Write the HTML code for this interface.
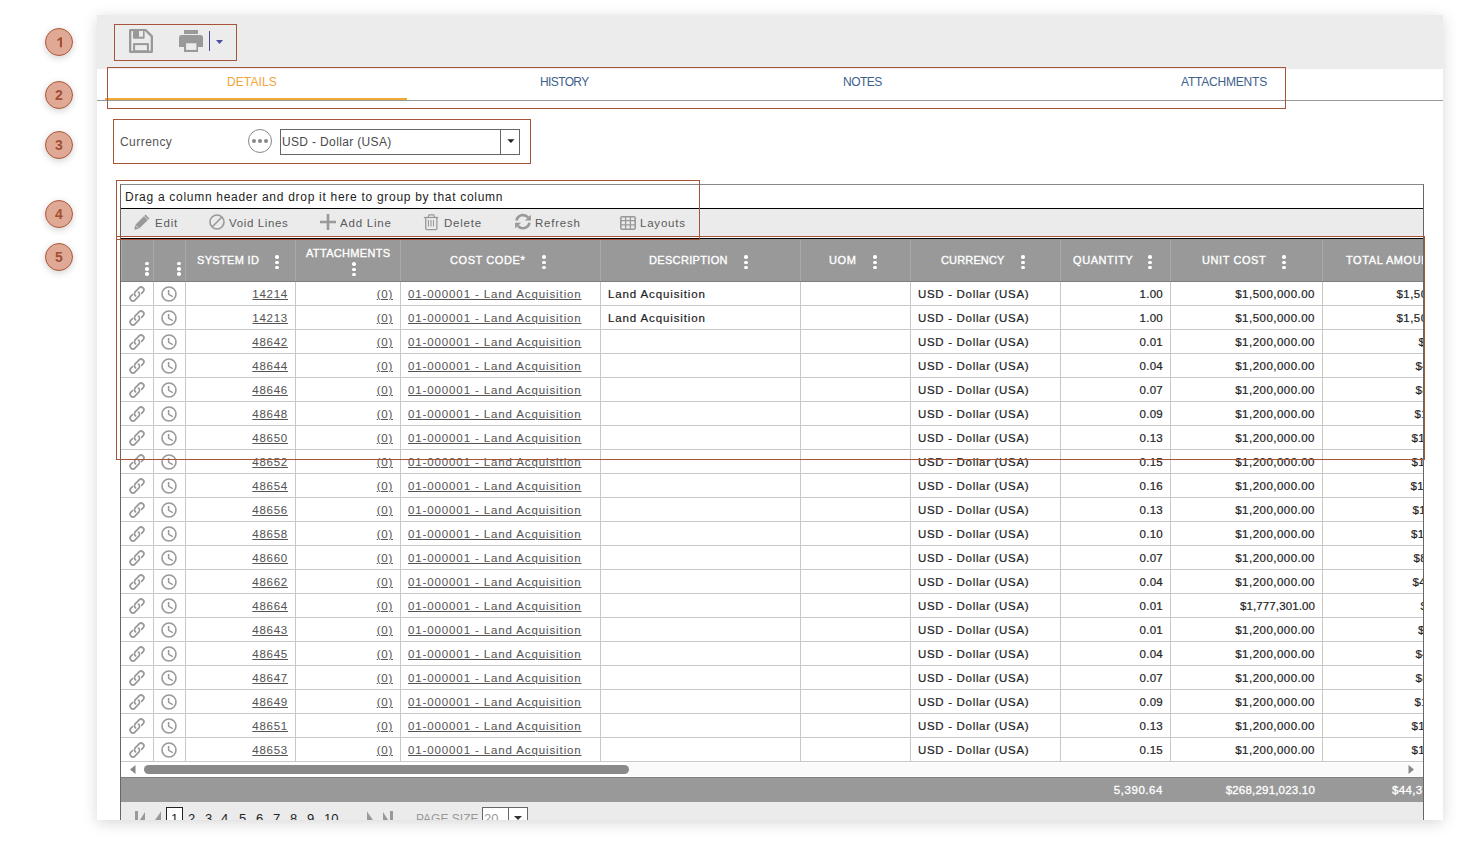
<!DOCTYPE html>
<html><head><meta charset="utf-8">
<style>
*{box-sizing:border-box;margin:0;padding:0}
html,body{width:1462px;height:843px;overflow:hidden;background:#fff;font-family:"Liberation Sans",sans-serif;position:relative}
.a{position:absolute}
.panel{position:absolute;left:97px;top:15px;width:1346px;height:805px;background:#fff;box-shadow:0 3px 14px rgba(0,0,0,0.16)}
.circ{position:absolute;left:45px;width:28px;height:28px;border-radius:50%;background:#dfa995;border:1.5px solid #b0583b;color:#a24f33;font-weight:bold;font-size:14px;line-height:27px;text-align:center;box-shadow:0 2px 7px rgba(0,0,0,0.18)}
.red{position:absolute;border:1px solid #a8543a;z-index:20}
.tab{position:absolute;top:77px;font-size:12px;color:#3c6189;letter-spacing:0.1px;line-height:10px;white-space:nowrap}
.tb{position:absolute;top:216px;font-size:11.5px;color:#5a5a5a;white-space:nowrap;line-height:14px;letter-spacing:0.78px}
.hd{position:absolute;top:240px;height:41px;background:#999;border-right:1px solid #aaa;color:#fff;font-size:11px;font-weight:normal;-webkit-text-stroke:0.35px #fff;letter-spacing:0.58px}
.hd span{position:absolute;white-space:nowrap;top:15px;line-height:11px}
.keb{position:absolute;width:4px;height:14px}
.keb i{position:absolute;left:0.2px;width:3.6px;height:3.6px;border-radius:50%;background:#fff}
.row{position:absolute;left:121px;width:1302px;height:24px;border-bottom:1px solid #c8c8c8}
.c{position:absolute;top:0;height:23px;border-right:1px solid #c8c8c8;font-size:11.5px;color:#222;white-space:nowrap;overflow:hidden;line-height:24px;letter-spacing:0.73px;-webkit-text-stroke:0.2px currentColor}
.row .c{margin-left:-121px}
.c.r{text-align:right;padding-right:7px}
.c.l{text-align:left;padding-left:7px}
.c.lk{color:#555;-webkit-text-stroke:0.05px currentColor}
.c u{text-decoration:underline;text-underline-offset:1px}
.ic{position:absolute;top:4px}
.ft{position:absolute;top:783px;font-size:11.5px;color:#fff;line-height:14px;text-align:right;-webkit-text-stroke:0.3px #fff}
.pg{position:absolute;top:812px;font-size:13px;color:#222;line-height:14px}
</style></head><body>
<div class="panel"></div>
<!-- numbered circles -->
<div class="circ" style="top:28px"><svg style="position:absolute;left:10.5px;top:8px" width="6" height="11" viewBox="0 0 6 11"><path d="M2.9 0.3 H5 V10.2 H2.9 V2.8 Q1.8 3.6 0.4 3.9 V2.2 Q2.2 1.6 2.9 0.3 Z" fill="#a24f33"/></svg></div>
<div class="circ" style="top:81px">2</div>
<div class="circ" style="top:131px">3</div>
<div class="circ" style="top:200px">4</div>
<div class="circ" style="top:243px">5</div>

<!-- top toolbar -->
<div class="a" style="left:97px;top:15px;width:1346px;height:54px;background:#ececec"></div>
<svg class="a" style="left:129px;top:29px" width="24" height="24" viewBox="0 0 24 24">
  <path d="M1.15 1.15 H16.6 L22.85 7.4 V22.85 H1.15 Z" fill="none" stroke="#999" stroke-width="2.3" stroke-linejoin="round"/>
  <rect x="4" y="2" width="11.6" height="7.8" rx="0.8" fill="#999"/>
  <rect x="10" y="2" width="4" height="5.7" fill="#ececec"/>
  <rect x="5.1" y="15.1" width="13.8" height="7.2" fill="none" stroke="#999" stroke-width="2"/>
</svg>
<svg class="a" style="left:179px;top:30px" width="24" height="22" viewBox="0 0 24 22">
  <rect x="5" y="0" width="14" height="4" fill="#999"/>
  <path d="M2.5 5 H21.5 Q24 5 24 8 V17 H0 V8 Q0 5 2.5 5 Z" fill="#999"/>
  <rect x="5" y="12" width="14" height="10" fill="#999"/>
  <rect x="7.1" y="13.3" width="10.3" height="6.6" fill="#ececec"/>
</svg>
<div class="a" style="left:209px;top:31px;width:1px;height:20px;background:#4a4d96"></div>
<svg class="a" style="left:216px;top:40px" width="7" height="4" viewBox="0 0 7 4"><path d="M0 0 H7 L3.5 4 Z" fill="#4a4da0"/></svg>

<!-- tabs -->
<div class="a" style="left:97px;top:100px;width:1346px;height:1px;background:#999"></div>
<div class="a" style="left:105px;top:98px;width:302px;height:2px;background:#f2a934"></div>
<div class="tab" style="left:227px;color:#f0a53a">DETAILS</div>
<div class="tab" style="left:540px;letter-spacing:-0.62px">HISTORY</div>
<div class="tab" style="left:843px;letter-spacing:-0.5px">NOTES</div>
<div class="tab" style="left:1181px;letter-spacing:-0.2px">ATTACHMENTS</div>

<!-- currency -->
<div class="a" style="left:120px;top:135px;font-size:12px;color:#555;line-height:14px;letter-spacing:0.45px">Currency</div>
<div class="a" style="left:248px;top:129px;width:24px;height:24px;border-radius:50%;border:1px solid #888;background:#fff"></div>
<div class="a" style="left:252px;top:139px;width:4px;height:4px;border-radius:50%;background:#888"></div>
<div class="a" style="left:258px;top:139px;width:4px;height:4px;border-radius:50%;background:#888"></div>
<div class="a" style="left:264px;top:139px;width:4px;height:4px;border-radius:50%;background:#888"></div>
<div class="a" style="left:280px;top:129px;width:240px;height:26px;border:1px solid #666;background:#fff"></div>
<div class="a" style="left:500px;top:130px;width:1px;height:24px;background:#666"></div>
<svg class="a" style="left:507px;top:139px" width="8" height="4" viewBox="0 0 8 4"><path d="M0.3 0.3 H7.5 L3.9 3.9 Z" fill="#222"/></svg>
<div class="a" style="left:282px;top:135px;font-size:12px;color:#4a4a4a;line-height:14px;letter-spacing:0.35px">USD - Dollar (USA)</div>

<!-- grid frame -->
<div class="a" style="left:120px;top:184px;width:1304px;height:636px;border-left:1px solid #666;border-right:1px solid #666;border-top:1px solid #888"></div>
<div class="a" style="left:125px;top:190px;font-size:12px;color:#222;line-height:14px;letter-spacing:0.71px">Drag a column header and drop it here to group by that column</div>
<div class="a" style="left:121px;top:208px;width:1302px;height:1px;background:#000"></div>
<div class="a" style="left:121px;top:209px;width:1302px;height:27px;background:#ebebeb"></div>
<div class="a" style="left:121px;top:238px;width:1302px;height:1px;background:#000"></div>
<div class="a" style="left:121px;top:239px;width:1302px;height:1px;background:#999"></div>

<!-- grid toolbar -->
<svg class="a" style="left:134px;top:214px" width="16" height="16" viewBox="0 0 16 16"><path d="M11.6 0.6 L15.4 4.4 L5 14.8 L0.3 15.7 L1.2 11 Z" fill="#999"/><path d="M10.2 2 L14 5.8" stroke="#ebebeb" stroke-width="0.8"/><path d="M1.2 11 L5 14.8" stroke="#ebebeb" stroke-width="0.8"/></svg>
<div class="tb" style="left:155px">Edit</div>
<svg class="a" style="left:209px;top:214px" width="16" height="16" viewBox="0 0 16 16"><circle cx="8" cy="8" r="7" fill="none" stroke="#999" stroke-width="1.6"/><path d="M3 13 L13 3" stroke="#999" stroke-width="1.6"/></svg>
<div class="tb" style="left:229px;letter-spacing:0.63px">Void Lines</div>
<svg class="a" style="left:320px;top:214px" width="16" height="16" viewBox="0 0 16 16"><path d="M8 0 V16 M0 8 H16" stroke="#999" stroke-width="2.6"/></svg>
<div class="tb" style="left:340px">Add Line</div>
<svg class="a" style="left:423px;top:214px" width="17" height="17" viewBox="0 0 17 17"><path d="M0.8 3.5 H15.2" stroke="#999" stroke-width="1.3"/><path d="M5.2 3.2 L6 0.9 H10.8 L11.6 3.2" stroke="#999" stroke-width="1.2" fill="none"/><path d="M2.7 3.8 V14.3 Q2.7 15.6 4.1 15.6 H12.5 Q13.9 15.6 13.9 14.3 V3.8" stroke="#999" stroke-width="1.3" fill="none"/><path d="M5.4 6 V12.5 M8 6 V12.5 M10.5 6 V12.5" stroke="#999" stroke-width="1.1"/></svg>
<div class="tb" style="left:444px">Delete</div>
<svg class="a" style="left:515px;top:213px" width="16" height="17" viewBox="0 0 16 17"><path d="M1.55 7.5 A6.55 6.55 0 0 1 13.02 4.44" stroke="#999" stroke-width="2.7" fill="none"/><path d="M9.9 7.5 H15.9 V1.8 Z" fill="#999"/><path d="M14.45 9.8 A6.55 6.55 0 0 1 2.98 12.86" stroke="#999" stroke-width="2.7" fill="none"/><path d="M0.1 9.8 H6.1 L0.1 15.5 Z" fill="#999"/></svg>
<div class="tb" style="left:535px;letter-spacing:0.78px">Refresh</div>
<svg class="a" style="left:620px;top:216px" width="16" height="14" viewBox="0 0 16 14"><rect x="0.8" y="0.8" width="14.4" height="12.4" rx="1.5" fill="none" stroke="#999" stroke-width="1.6"/><path d="M0.8 4.6 H15.2 M0.8 8.8 H15.2 M5.6 0.8 V13.2 M10.4 0.8 V13.2" stroke="#999" stroke-width="1.3"/></svg>
<div class="tb" style="left:640px">Layouts</div>

<!-- header -->
<div class="hd" style="left:121px;width:33px"><div class="keb" style="left:24px;top:21.6px"><i style="top:0.2px"></i><i style="top:5.5px"></i><i style="top:10.8px"></i></div></div>
<div class="hd" style="left:154px;width:32px"><div class="keb" style="left:23px;top:21.6px"><i style="top:0.2px"></i><i style="top:5.5px"></i><i style="top:10.8px"></i></div></div>
<div class="hd" style="left:186px;width:110px"><span style="left:11px;letter-spacing:0.33px">SYSTEM ID</span><div class="keb" style="left:89px;top:15px"><i style="top:0.2px"></i><i style="top:5.5px"></i><i style="top:10.8px"></i></div></div>
<div class="hd" style="left:296px;width:105px"><span style="left:10px;top:8px;letter-spacing:0.33px">ATTACHMENTS</span><div class="keb" style="left:56px;top:22px"><i style="top:0.2px"></i><i style="top:5.5px"></i><i style="top:10.8px"></i></div></div>
<div class="hd" style="left:401px;width:200px"><span style="left:49px">COST CODE*</span><div class="keb" style="left:141px;top:15px"><i style="top:0.2px"></i><i style="top:5.5px"></i><i style="top:10.8px"></i></div></div>
<div class="hd" style="left:601px;width:200px"><span style="left:48px;letter-spacing:0.33px">DESCRIPTION</span><div class="keb" style="left:143px;top:15px"><i style="top:0.2px"></i><i style="top:5.5px"></i><i style="top:10.8px"></i></div></div>
<div class="hd" style="left:801px;width:110px"><span style="left:28px">UOM</span><div class="keb" style="left:72px;top:15px"><i style="top:0.2px"></i><i style="top:5.5px"></i><i style="top:10.8px"></i></div></div>
<div class="hd" style="left:911px;width:150px"><span style="left:30px;letter-spacing:0.15px">CURRENCY</span><div class="keb" style="left:110px;top:15px"><i style="top:0.2px"></i><i style="top:5.5px"></i><i style="top:10.8px"></i></div></div>
<div class="hd" style="left:1061px;width:110px"><span style="left:12px">QUANTITY</span><div class="keb" style="left:87px;top:15px"><i style="top:0.2px"></i><i style="top:5.5px"></i><i style="top:10.8px"></i></div></div>
<div class="hd" style="left:1171px;width:152px"><span style="left:31px">UNIT COST</span><div class="keb" style="left:111px;top:15px"><i style="top:0.2px"></i><i style="top:5.5px"></i><i style="top:10.8px"></i></div></div>
<div class="hd" style="left:1323px;width:100px;border-right:none;overflow:hidden"><span style="left:23px">TOTAL AMOUNT</span></div>
<div class="a" style="left:121px;top:281px;width:1302px;height:1px;background:#808080"></div>
<div class="a" style="left:121px;top:240px;width:1px;height:41px;background:#aaa"></div>

<!-- rows -->
<div class="a" style="left:121px;top:282px;width:1302px;height:480px;overflow:hidden">
<div class="a" style="left:-121px;top:-282px;width:1462px;height:843px">
<div class="row" style="top:282px"><div class="c" style="left:121px;width:33px"><svg class="ic" style="left:6px;top:2px" width="20" height="20" viewBox="0 0 20 20"><path d="M14.58 9.38 L16.03 7.93 A2.8 2.8 0 0 0 12.07 3.97 L8.22 7.82 A2.8 2.8 0 0 0 8.5 11.9 M5.42 10.62 L3.97 12.07 A2.8 2.8 0 0 0 7.93 16.03 L11.78 12.18 A2.8 2.8 0 0 0 11.5 8.1" stroke="#999" stroke-width="1.7" fill="none" stroke-linecap="round"/></svg></div><div class="c" style="left:154px;width:32px"><svg class="ic" style="left:7px" width="16" height="16" viewBox="0 0 16 16"><circle cx="8" cy="8" r="7" stroke="#999" stroke-width="1.6" fill="none"/><path d="M7.6 4 V8.3 L11.8 10.6" stroke="#999" stroke-width="1.5" fill="none"/></svg></div><div class="c r lk" style="left:186px;width:110px"><u>14214</u></div><div class="c r lk" style="left:296px;width:105px"><u>(0)</u></div><div class="c l lk" style="left:401px;width:200px;letter-spacing:0.88px"><u>01-000001 - Land Acquisition</u></div><div class="c l" style="left:601px;width:200px;letter-spacing:0.88px">Land Acquisition</div><div class="c" style="left:801px;width:110px"></div><div class="c l" style="left:911px;width:150px;letter-spacing:0.68px">USD - Dollar (USA)</div><div class="c r" style="left:1061px;width:110px;letter-spacing:0.28px">1.00</div><div class="c r" style="left:1171px;width:152px;letter-spacing:0.48px">$1,500,000.00</div><div class="c" style="left:1323px;width:162px;letter-spacing:0.48px"><span style="position:absolute;left:73.4px">$1,500,000.00</span></div></div>
<div class="row" style="top:306px"><div class="c" style="left:121px;width:33px"><svg class="ic" style="left:6px;top:2px" width="20" height="20" viewBox="0 0 20 20"><path d="M14.58 9.38 L16.03 7.93 A2.8 2.8 0 0 0 12.07 3.97 L8.22 7.82 A2.8 2.8 0 0 0 8.5 11.9 M5.42 10.62 L3.97 12.07 A2.8 2.8 0 0 0 7.93 16.03 L11.78 12.18 A2.8 2.8 0 0 0 11.5 8.1" stroke="#999" stroke-width="1.7" fill="none" stroke-linecap="round"/></svg></div><div class="c" style="left:154px;width:32px"><svg class="ic" style="left:7px" width="16" height="16" viewBox="0 0 16 16"><circle cx="8" cy="8" r="7" stroke="#999" stroke-width="1.6" fill="none"/><path d="M7.6 4 V8.3 L11.8 10.6" stroke="#999" stroke-width="1.5" fill="none"/></svg></div><div class="c r lk" style="left:186px;width:110px"><u>14213</u></div><div class="c r lk" style="left:296px;width:105px"><u>(0)</u></div><div class="c l lk" style="left:401px;width:200px;letter-spacing:0.88px"><u>01-000001 - Land Acquisition</u></div><div class="c l" style="left:601px;width:200px;letter-spacing:0.88px">Land Acquisition</div><div class="c" style="left:801px;width:110px"></div><div class="c l" style="left:911px;width:150px;letter-spacing:0.68px">USD - Dollar (USA)</div><div class="c r" style="left:1061px;width:110px;letter-spacing:0.28px">1.00</div><div class="c r" style="left:1171px;width:152px;letter-spacing:0.48px">$1,500,000.00</div><div class="c" style="left:1323px;width:162px;letter-spacing:0.48px"><span style="position:absolute;left:73.4px">$1,500,000.00</span></div></div>
<div class="row" style="top:330px"><div class="c" style="left:121px;width:33px"><svg class="ic" style="left:6px;top:2px" width="20" height="20" viewBox="0 0 20 20"><path d="M14.58 9.38 L16.03 7.93 A2.8 2.8 0 0 0 12.07 3.97 L8.22 7.82 A2.8 2.8 0 0 0 8.5 11.9 M5.42 10.62 L3.97 12.07 A2.8 2.8 0 0 0 7.93 16.03 L11.78 12.18 A2.8 2.8 0 0 0 11.5 8.1" stroke="#999" stroke-width="1.7" fill="none" stroke-linecap="round"/></svg></div><div class="c" style="left:154px;width:32px"><svg class="ic" style="left:7px" width="16" height="16" viewBox="0 0 16 16"><circle cx="8" cy="8" r="7" stroke="#999" stroke-width="1.6" fill="none"/><path d="M7.6 4 V8.3 L11.8 10.6" stroke="#999" stroke-width="1.5" fill="none"/></svg></div><div class="c r lk" style="left:186px;width:110px"><u>48642</u></div><div class="c r lk" style="left:296px;width:105px"><u>(0)</u></div><div class="c l lk" style="left:401px;width:200px;letter-spacing:0.88px"><u>01-000001 - Land Acquisition</u></div><div class="c l" style="left:601px;width:200px;letter-spacing:0.88px"></div><div class="c" style="left:801px;width:110px"></div><div class="c l" style="left:911px;width:150px;letter-spacing:0.68px">USD - Dollar (USA)</div><div class="c r" style="left:1061px;width:110px;letter-spacing:0.28px">0.01</div><div class="c r" style="left:1171px;width:152px;letter-spacing:0.48px">$1,200,000.00</div><div class="c" style="left:1323px;width:162px;letter-spacing:0.48px"><span style="position:absolute;left:95.4px">$12,000.00</span></div></div>
<div class="row" style="top:354px"><div class="c" style="left:121px;width:33px"><svg class="ic" style="left:6px;top:2px" width="20" height="20" viewBox="0 0 20 20"><path d="M14.58 9.38 L16.03 7.93 A2.8 2.8 0 0 0 12.07 3.97 L8.22 7.82 A2.8 2.8 0 0 0 8.5 11.9 M5.42 10.62 L3.97 12.07 A2.8 2.8 0 0 0 7.93 16.03 L11.78 12.18 A2.8 2.8 0 0 0 11.5 8.1" stroke="#999" stroke-width="1.7" fill="none" stroke-linecap="round"/></svg></div><div class="c" style="left:154px;width:32px"><svg class="ic" style="left:7px" width="16" height="16" viewBox="0 0 16 16"><circle cx="8" cy="8" r="7" stroke="#999" stroke-width="1.6" fill="none"/><path d="M7.6 4 V8.3 L11.8 10.6" stroke="#999" stroke-width="1.5" fill="none"/></svg></div><div class="c r lk" style="left:186px;width:110px"><u>48644</u></div><div class="c r lk" style="left:296px;width:105px"><u>(0)</u></div><div class="c l lk" style="left:401px;width:200px;letter-spacing:0.88px"><u>01-000001 - Land Acquisition</u></div><div class="c l" style="left:601px;width:200px;letter-spacing:0.88px"></div><div class="c" style="left:801px;width:110px"></div><div class="c l" style="left:911px;width:150px;letter-spacing:0.68px">USD - Dollar (USA)</div><div class="c r" style="left:1061px;width:110px;letter-spacing:0.28px">0.04</div><div class="c r" style="left:1171px;width:152px;letter-spacing:0.48px">$1,200,000.00</div><div class="c" style="left:1323px;width:162px;letter-spacing:0.48px"><span style="position:absolute;left:92.4px">$48,000.00</span></div></div>
<div class="row" style="top:378px"><div class="c" style="left:121px;width:33px"><svg class="ic" style="left:6px;top:2px" width="20" height="20" viewBox="0 0 20 20"><path d="M14.58 9.38 L16.03 7.93 A2.8 2.8 0 0 0 12.07 3.97 L8.22 7.82 A2.8 2.8 0 0 0 8.5 11.9 M5.42 10.62 L3.97 12.07 A2.8 2.8 0 0 0 7.93 16.03 L11.78 12.18 A2.8 2.8 0 0 0 11.5 8.1" stroke="#999" stroke-width="1.7" fill="none" stroke-linecap="round"/></svg></div><div class="c" style="left:154px;width:32px"><svg class="ic" style="left:7px" width="16" height="16" viewBox="0 0 16 16"><circle cx="8" cy="8" r="7" stroke="#999" stroke-width="1.6" fill="none"/><path d="M7.6 4 V8.3 L11.8 10.6" stroke="#999" stroke-width="1.5" fill="none"/></svg></div><div class="c r lk" style="left:186px;width:110px"><u>48646</u></div><div class="c r lk" style="left:296px;width:105px"><u>(0)</u></div><div class="c l lk" style="left:401px;width:200px;letter-spacing:0.88px"><u>01-000001 - Land Acquisition</u></div><div class="c l" style="left:601px;width:200px;letter-spacing:0.88px"></div><div class="c" style="left:801px;width:110px"></div><div class="c l" style="left:911px;width:150px;letter-spacing:0.68px">USD - Dollar (USA)</div><div class="c r" style="left:1061px;width:110px;letter-spacing:0.28px">0.07</div><div class="c r" style="left:1171px;width:152px;letter-spacing:0.48px">$1,200,000.00</div><div class="c" style="left:1323px;width:162px;letter-spacing:0.48px"><span style="position:absolute;left:92.4px">$84,000.00</span></div></div>
<div class="row" style="top:402px"><div class="c" style="left:121px;width:33px"><svg class="ic" style="left:6px;top:2px" width="20" height="20" viewBox="0 0 20 20"><path d="M14.58 9.38 L16.03 7.93 A2.8 2.8 0 0 0 12.07 3.97 L8.22 7.82 A2.8 2.8 0 0 0 8.5 11.9 M5.42 10.62 L3.97 12.07 A2.8 2.8 0 0 0 7.93 16.03 L11.78 12.18 A2.8 2.8 0 0 0 11.5 8.1" stroke="#999" stroke-width="1.7" fill="none" stroke-linecap="round"/></svg></div><div class="c" style="left:154px;width:32px"><svg class="ic" style="left:7px" width="16" height="16" viewBox="0 0 16 16"><circle cx="8" cy="8" r="7" stroke="#999" stroke-width="1.6" fill="none"/><path d="M7.6 4 V8.3 L11.8 10.6" stroke="#999" stroke-width="1.5" fill="none"/></svg></div><div class="c r lk" style="left:186px;width:110px"><u>48648</u></div><div class="c r lk" style="left:296px;width:105px"><u>(0)</u></div><div class="c l lk" style="left:401px;width:200px;letter-spacing:0.88px"><u>01-000001 - Land Acquisition</u></div><div class="c l" style="left:601px;width:200px;letter-spacing:0.88px"></div><div class="c" style="left:801px;width:110px"></div><div class="c l" style="left:911px;width:150px;letter-spacing:0.68px">USD - Dollar (USA)</div><div class="c r" style="left:1061px;width:110px;letter-spacing:0.28px">0.09</div><div class="c r" style="left:1171px;width:152px;letter-spacing:0.48px">$1,200,000.00</div><div class="c" style="left:1323px;width:162px;letter-spacing:0.48px"><span style="position:absolute;left:91.4px">$108,000.00</span></div></div>
<div class="row" style="top:426px"><div class="c" style="left:121px;width:33px"><svg class="ic" style="left:6px;top:2px" width="20" height="20" viewBox="0 0 20 20"><path d="M14.58 9.38 L16.03 7.93 A2.8 2.8 0 0 0 12.07 3.97 L8.22 7.82 A2.8 2.8 0 0 0 8.5 11.9 M5.42 10.62 L3.97 12.07 A2.8 2.8 0 0 0 7.93 16.03 L11.78 12.18 A2.8 2.8 0 0 0 11.5 8.1" stroke="#999" stroke-width="1.7" fill="none" stroke-linecap="round"/></svg></div><div class="c" style="left:154px;width:32px"><svg class="ic" style="left:7px" width="16" height="16" viewBox="0 0 16 16"><circle cx="8" cy="8" r="7" stroke="#999" stroke-width="1.6" fill="none"/><path d="M7.6 4 V8.3 L11.8 10.6" stroke="#999" stroke-width="1.5" fill="none"/></svg></div><div class="c r lk" style="left:186px;width:110px"><u>48650</u></div><div class="c r lk" style="left:296px;width:105px"><u>(0)</u></div><div class="c l lk" style="left:401px;width:200px;letter-spacing:0.88px"><u>01-000001 - Land Acquisition</u></div><div class="c l" style="left:601px;width:200px;letter-spacing:0.88px"></div><div class="c" style="left:801px;width:110px"></div><div class="c l" style="left:911px;width:150px;letter-spacing:0.68px">USD - Dollar (USA)</div><div class="c r" style="left:1061px;width:110px;letter-spacing:0.28px">0.13</div><div class="c r" style="left:1171px;width:152px;letter-spacing:0.48px">$1,200,000.00</div><div class="c" style="left:1323px;width:162px;letter-spacing:0.48px"><span style="position:absolute;left:88.4px">$156,000.00</span></div></div>
<div class="row" style="top:450px"><div class="c" style="left:121px;width:33px"><svg class="ic" style="left:6px;top:2px" width="20" height="20" viewBox="0 0 20 20"><path d="M14.58 9.38 L16.03 7.93 A2.8 2.8 0 0 0 12.07 3.97 L8.22 7.82 A2.8 2.8 0 0 0 8.5 11.9 M5.42 10.62 L3.97 12.07 A2.8 2.8 0 0 0 7.93 16.03 L11.78 12.18 A2.8 2.8 0 0 0 11.5 8.1" stroke="#999" stroke-width="1.7" fill="none" stroke-linecap="round"/></svg></div><div class="c" style="left:154px;width:32px"><svg class="ic" style="left:7px" width="16" height="16" viewBox="0 0 16 16"><circle cx="8" cy="8" r="7" stroke="#999" stroke-width="1.6" fill="none"/><path d="M7.6 4 V8.3 L11.8 10.6" stroke="#999" stroke-width="1.5" fill="none"/></svg></div><div class="c r lk" style="left:186px;width:110px"><u>48652</u></div><div class="c r lk" style="left:296px;width:105px"><u>(0)</u></div><div class="c l lk" style="left:401px;width:200px;letter-spacing:0.88px"><u>01-000001 - Land Acquisition</u></div><div class="c l" style="left:601px;width:200px;letter-spacing:0.88px"></div><div class="c" style="left:801px;width:110px"></div><div class="c l" style="left:911px;width:150px;letter-spacing:0.68px">USD - Dollar (USA)</div><div class="c r" style="left:1061px;width:110px;letter-spacing:0.28px">0.15</div><div class="c r" style="left:1171px;width:152px;letter-spacing:0.48px">$1,200,000.00</div><div class="c" style="left:1323px;width:162px;letter-spacing:0.48px"><span style="position:absolute;left:88.4px">$180,000.00</span></div></div>
<div class="row" style="top:474px"><div class="c" style="left:121px;width:33px"><svg class="ic" style="left:6px;top:2px" width="20" height="20" viewBox="0 0 20 20"><path d="M14.58 9.38 L16.03 7.93 A2.8 2.8 0 0 0 12.07 3.97 L8.22 7.82 A2.8 2.8 0 0 0 8.5 11.9 M5.42 10.62 L3.97 12.07 A2.8 2.8 0 0 0 7.93 16.03 L11.78 12.18 A2.8 2.8 0 0 0 11.5 8.1" stroke="#999" stroke-width="1.7" fill="none" stroke-linecap="round"/></svg></div><div class="c" style="left:154px;width:32px"><svg class="ic" style="left:7px" width="16" height="16" viewBox="0 0 16 16"><circle cx="8" cy="8" r="7" stroke="#999" stroke-width="1.6" fill="none"/><path d="M7.6 4 V8.3 L11.8 10.6" stroke="#999" stroke-width="1.5" fill="none"/></svg></div><div class="c r lk" style="left:186px;width:110px"><u>48654</u></div><div class="c r lk" style="left:296px;width:105px"><u>(0)</u></div><div class="c l lk" style="left:401px;width:200px;letter-spacing:0.88px"><u>01-000001 - Land Acquisition</u></div><div class="c l" style="left:601px;width:200px;letter-spacing:0.88px"></div><div class="c" style="left:801px;width:110px"></div><div class="c l" style="left:911px;width:150px;letter-spacing:0.68px">USD - Dollar (USA)</div><div class="c r" style="left:1061px;width:110px;letter-spacing:0.28px">0.16</div><div class="c r" style="left:1171px;width:152px;letter-spacing:0.48px">$1,200,000.00</div><div class="c" style="left:1323px;width:162px;letter-spacing:0.48px"><span style="position:absolute;left:87.4px">$192,000.00</span></div></div>
<div class="row" style="top:498px"><div class="c" style="left:121px;width:33px"><svg class="ic" style="left:6px;top:2px" width="20" height="20" viewBox="0 0 20 20"><path d="M14.58 9.38 L16.03 7.93 A2.8 2.8 0 0 0 12.07 3.97 L8.22 7.82 A2.8 2.8 0 0 0 8.5 11.9 M5.42 10.62 L3.97 12.07 A2.8 2.8 0 0 0 7.93 16.03 L11.78 12.18 A2.8 2.8 0 0 0 11.5 8.1" stroke="#999" stroke-width="1.7" fill="none" stroke-linecap="round"/></svg></div><div class="c" style="left:154px;width:32px"><svg class="ic" style="left:7px" width="16" height="16" viewBox="0 0 16 16"><circle cx="8" cy="8" r="7" stroke="#999" stroke-width="1.6" fill="none"/><path d="M7.6 4 V8.3 L11.8 10.6" stroke="#999" stroke-width="1.5" fill="none"/></svg></div><div class="c r lk" style="left:186px;width:110px"><u>48656</u></div><div class="c r lk" style="left:296px;width:105px"><u>(0)</u></div><div class="c l lk" style="left:401px;width:200px;letter-spacing:0.88px"><u>01-000001 - Land Acquisition</u></div><div class="c l" style="left:601px;width:200px;letter-spacing:0.88px"></div><div class="c" style="left:801px;width:110px"></div><div class="c l" style="left:911px;width:150px;letter-spacing:0.68px">USD - Dollar (USA)</div><div class="c r" style="left:1061px;width:110px;letter-spacing:0.28px">0.13</div><div class="c r" style="left:1171px;width:152px;letter-spacing:0.48px">$1,200,000.00</div><div class="c" style="left:1323px;width:162px;letter-spacing:0.48px"><span style="position:absolute;left:89.4px">$156,000.00</span></div></div>
<div class="row" style="top:522px"><div class="c" style="left:121px;width:33px"><svg class="ic" style="left:6px;top:2px" width="20" height="20" viewBox="0 0 20 20"><path d="M14.58 9.38 L16.03 7.93 A2.8 2.8 0 0 0 12.07 3.97 L8.22 7.82 A2.8 2.8 0 0 0 8.5 11.9 M5.42 10.62 L3.97 12.07 A2.8 2.8 0 0 0 7.93 16.03 L11.78 12.18 A2.8 2.8 0 0 0 11.5 8.1" stroke="#999" stroke-width="1.7" fill="none" stroke-linecap="round"/></svg></div><div class="c" style="left:154px;width:32px"><svg class="ic" style="left:7px" width="16" height="16" viewBox="0 0 16 16"><circle cx="8" cy="8" r="7" stroke="#999" stroke-width="1.6" fill="none"/><path d="M7.6 4 V8.3 L11.8 10.6" stroke="#999" stroke-width="1.5" fill="none"/></svg></div><div class="c r lk" style="left:186px;width:110px"><u>48658</u></div><div class="c r lk" style="left:296px;width:105px"><u>(0)</u></div><div class="c l lk" style="left:401px;width:200px;letter-spacing:0.88px"><u>01-000001 - Land Acquisition</u></div><div class="c l" style="left:601px;width:200px;letter-spacing:0.88px"></div><div class="c" style="left:801px;width:110px"></div><div class="c l" style="left:911px;width:150px;letter-spacing:0.68px">USD - Dollar (USA)</div><div class="c r" style="left:1061px;width:110px;letter-spacing:0.28px">0.10</div><div class="c r" style="left:1171px;width:152px;letter-spacing:0.48px">$1,200,000.00</div><div class="c" style="left:1323px;width:162px;letter-spacing:0.48px"><span style="position:absolute;left:87.9px">$120,000.00</span></div></div>
<div class="row" style="top:546px"><div class="c" style="left:121px;width:33px"><svg class="ic" style="left:6px;top:2px" width="20" height="20" viewBox="0 0 20 20"><path d="M14.58 9.38 L16.03 7.93 A2.8 2.8 0 0 0 12.07 3.97 L8.22 7.82 A2.8 2.8 0 0 0 8.5 11.9 M5.42 10.62 L3.97 12.07 A2.8 2.8 0 0 0 7.93 16.03 L11.78 12.18 A2.8 2.8 0 0 0 11.5 8.1" stroke="#999" stroke-width="1.7" fill="none" stroke-linecap="round"/></svg></div><div class="c" style="left:154px;width:32px"><svg class="ic" style="left:7px" width="16" height="16" viewBox="0 0 16 16"><circle cx="8" cy="8" r="7" stroke="#999" stroke-width="1.6" fill="none"/><path d="M7.6 4 V8.3 L11.8 10.6" stroke="#999" stroke-width="1.5" fill="none"/></svg></div><div class="c r lk" style="left:186px;width:110px"><u>48660</u></div><div class="c r lk" style="left:296px;width:105px"><u>(0)</u></div><div class="c l lk" style="left:401px;width:200px;letter-spacing:0.88px"><u>01-000001 - Land Acquisition</u></div><div class="c l" style="left:601px;width:200px;letter-spacing:0.88px"></div><div class="c" style="left:801px;width:110px"></div><div class="c l" style="left:911px;width:150px;letter-spacing:0.68px">USD - Dollar (USA)</div><div class="c r" style="left:1061px;width:110px;letter-spacing:0.28px">0.07</div><div class="c r" style="left:1171px;width:152px;letter-spacing:0.48px">$1,200,000.00</div><div class="c" style="left:1323px;width:162px;letter-spacing:0.48px"><span style="position:absolute;left:90.4px">$84,000.00</span></div></div>
<div class="row" style="top:570px"><div class="c" style="left:121px;width:33px"><svg class="ic" style="left:6px;top:2px" width="20" height="20" viewBox="0 0 20 20"><path d="M14.58 9.38 L16.03 7.93 A2.8 2.8 0 0 0 12.07 3.97 L8.22 7.82 A2.8 2.8 0 0 0 8.5 11.9 M5.42 10.62 L3.97 12.07 A2.8 2.8 0 0 0 7.93 16.03 L11.78 12.18 A2.8 2.8 0 0 0 11.5 8.1" stroke="#999" stroke-width="1.7" fill="none" stroke-linecap="round"/></svg></div><div class="c" style="left:154px;width:32px"><svg class="ic" style="left:7px" width="16" height="16" viewBox="0 0 16 16"><circle cx="8" cy="8" r="7" stroke="#999" stroke-width="1.6" fill="none"/><path d="M7.6 4 V8.3 L11.8 10.6" stroke="#999" stroke-width="1.5" fill="none"/></svg></div><div class="c r lk" style="left:186px;width:110px"><u>48662</u></div><div class="c r lk" style="left:296px;width:105px"><u>(0)</u></div><div class="c l lk" style="left:401px;width:200px;letter-spacing:0.88px"><u>01-000001 - Land Acquisition</u></div><div class="c l" style="left:601px;width:200px;letter-spacing:0.88px"></div><div class="c" style="left:801px;width:110px"></div><div class="c l" style="left:911px;width:150px;letter-spacing:0.68px">USD - Dollar (USA)</div><div class="c r" style="left:1061px;width:110px;letter-spacing:0.28px">0.04</div><div class="c r" style="left:1171px;width:152px;letter-spacing:0.48px">$1,200,000.00</div><div class="c" style="left:1323px;width:162px;letter-spacing:0.48px"><span style="position:absolute;left:89.4px">$48,000.00</span></div></div>
<div class="row" style="top:594px"><div class="c" style="left:121px;width:33px"><svg class="ic" style="left:6px;top:2px" width="20" height="20" viewBox="0 0 20 20"><path d="M14.58 9.38 L16.03 7.93 A2.8 2.8 0 0 0 12.07 3.97 L8.22 7.82 A2.8 2.8 0 0 0 8.5 11.9 M5.42 10.62 L3.97 12.07 A2.8 2.8 0 0 0 7.93 16.03 L11.78 12.18 A2.8 2.8 0 0 0 11.5 8.1" stroke="#999" stroke-width="1.7" fill="none" stroke-linecap="round"/></svg></div><div class="c" style="left:154px;width:32px"><svg class="ic" style="left:7px" width="16" height="16" viewBox="0 0 16 16"><circle cx="8" cy="8" r="7" stroke="#999" stroke-width="1.6" fill="none"/><path d="M7.6 4 V8.3 L11.8 10.6" stroke="#999" stroke-width="1.5" fill="none"/></svg></div><div class="c r lk" style="left:186px;width:110px"><u>48664</u></div><div class="c r lk" style="left:296px;width:105px"><u>(0)</u></div><div class="c l lk" style="left:401px;width:200px;letter-spacing:0.88px"><u>01-000001 - Land Acquisition</u></div><div class="c l" style="left:601px;width:200px;letter-spacing:0.88px"></div><div class="c" style="left:801px;width:110px"></div><div class="c l" style="left:911px;width:150px;letter-spacing:0.68px">USD - Dollar (USA)</div><div class="c r" style="left:1061px;width:110px;letter-spacing:0.28px">0.01</div><div class="c r" style="left:1171px;width:152px;letter-spacing:0.11px">$1,777,301.00</div><div class="c" style="left:1323px;width:162px;letter-spacing:0.48px"><span style="position:absolute;left:97.4px">$17,773.01</span></div></div>
<div class="row" style="top:618px"><div class="c" style="left:121px;width:33px"><svg class="ic" style="left:6px;top:2px" width="20" height="20" viewBox="0 0 20 20"><path d="M14.58 9.38 L16.03 7.93 A2.8 2.8 0 0 0 12.07 3.97 L8.22 7.82 A2.8 2.8 0 0 0 8.5 11.9 M5.42 10.62 L3.97 12.07 A2.8 2.8 0 0 0 7.93 16.03 L11.78 12.18 A2.8 2.8 0 0 0 11.5 8.1" stroke="#999" stroke-width="1.7" fill="none" stroke-linecap="round"/></svg></div><div class="c" style="left:154px;width:32px"><svg class="ic" style="left:7px" width="16" height="16" viewBox="0 0 16 16"><circle cx="8" cy="8" r="7" stroke="#999" stroke-width="1.6" fill="none"/><path d="M7.6 4 V8.3 L11.8 10.6" stroke="#999" stroke-width="1.5" fill="none"/></svg></div><div class="c r lk" style="left:186px;width:110px"><u>48643</u></div><div class="c r lk" style="left:296px;width:105px"><u>(0)</u></div><div class="c l lk" style="left:401px;width:200px;letter-spacing:0.88px"><u>01-000001 - Land Acquisition</u></div><div class="c l" style="left:601px;width:200px;letter-spacing:0.88px"></div><div class="c" style="left:801px;width:110px"></div><div class="c l" style="left:911px;width:150px;letter-spacing:0.68px">USD - Dollar (USA)</div><div class="c r" style="left:1061px;width:110px;letter-spacing:0.28px">0.01</div><div class="c r" style="left:1171px;width:152px;letter-spacing:0.48px">$1,200,000.00</div><div class="c" style="left:1323px;width:162px;letter-spacing:0.48px"><span style="position:absolute;left:94.9px">$12,000.00</span></div></div>
<div class="row" style="top:642px"><div class="c" style="left:121px;width:33px"><svg class="ic" style="left:6px;top:2px" width="20" height="20" viewBox="0 0 20 20"><path d="M14.58 9.38 L16.03 7.93 A2.8 2.8 0 0 0 12.07 3.97 L8.22 7.82 A2.8 2.8 0 0 0 8.5 11.9 M5.42 10.62 L3.97 12.07 A2.8 2.8 0 0 0 7.93 16.03 L11.78 12.18 A2.8 2.8 0 0 0 11.5 8.1" stroke="#999" stroke-width="1.7" fill="none" stroke-linecap="round"/></svg></div><div class="c" style="left:154px;width:32px"><svg class="ic" style="left:7px" width="16" height="16" viewBox="0 0 16 16"><circle cx="8" cy="8" r="7" stroke="#999" stroke-width="1.6" fill="none"/><path d="M7.6 4 V8.3 L11.8 10.6" stroke="#999" stroke-width="1.5" fill="none"/></svg></div><div class="c r lk" style="left:186px;width:110px"><u>48645</u></div><div class="c r lk" style="left:296px;width:105px"><u>(0)</u></div><div class="c l lk" style="left:401px;width:200px;letter-spacing:0.88px"><u>01-000001 - Land Acquisition</u></div><div class="c l" style="left:601px;width:200px;letter-spacing:0.88px"></div><div class="c" style="left:801px;width:110px"></div><div class="c l" style="left:911px;width:150px;letter-spacing:0.68px">USD - Dollar (USA)</div><div class="c r" style="left:1061px;width:110px;letter-spacing:0.28px">0.04</div><div class="c r" style="left:1171px;width:152px;letter-spacing:0.48px">$1,200,000.00</div><div class="c" style="left:1323px;width:162px;letter-spacing:0.48px"><span style="position:absolute;left:92.4px">$48,000.00</span></div></div>
<div class="row" style="top:666px"><div class="c" style="left:121px;width:33px"><svg class="ic" style="left:6px;top:2px" width="20" height="20" viewBox="0 0 20 20"><path d="M14.58 9.38 L16.03 7.93 A2.8 2.8 0 0 0 12.07 3.97 L8.22 7.82 A2.8 2.8 0 0 0 8.5 11.9 M5.42 10.62 L3.97 12.07 A2.8 2.8 0 0 0 7.93 16.03 L11.78 12.18 A2.8 2.8 0 0 0 11.5 8.1" stroke="#999" stroke-width="1.7" fill="none" stroke-linecap="round"/></svg></div><div class="c" style="left:154px;width:32px"><svg class="ic" style="left:7px" width="16" height="16" viewBox="0 0 16 16"><circle cx="8" cy="8" r="7" stroke="#999" stroke-width="1.6" fill="none"/><path d="M7.6 4 V8.3 L11.8 10.6" stroke="#999" stroke-width="1.5" fill="none"/></svg></div><div class="c r lk" style="left:186px;width:110px"><u>48647</u></div><div class="c r lk" style="left:296px;width:105px"><u>(0)</u></div><div class="c l lk" style="left:401px;width:200px;letter-spacing:0.88px"><u>01-000001 - Land Acquisition</u></div><div class="c l" style="left:601px;width:200px;letter-spacing:0.88px"></div><div class="c" style="left:801px;width:110px"></div><div class="c l" style="left:911px;width:150px;letter-spacing:0.68px">USD - Dollar (USA)</div><div class="c r" style="left:1061px;width:110px;letter-spacing:0.28px">0.07</div><div class="c r" style="left:1171px;width:152px;letter-spacing:0.48px">$1,200,000.00</div><div class="c" style="left:1323px;width:162px;letter-spacing:0.48px"><span style="position:absolute;left:92.4px">$84,000.00</span></div></div>
<div class="row" style="top:690px"><div class="c" style="left:121px;width:33px"><svg class="ic" style="left:6px;top:2px" width="20" height="20" viewBox="0 0 20 20"><path d="M14.58 9.38 L16.03 7.93 A2.8 2.8 0 0 0 12.07 3.97 L8.22 7.82 A2.8 2.8 0 0 0 8.5 11.9 M5.42 10.62 L3.97 12.07 A2.8 2.8 0 0 0 7.93 16.03 L11.78 12.18 A2.8 2.8 0 0 0 11.5 8.1" stroke="#999" stroke-width="1.7" fill="none" stroke-linecap="round"/></svg></div><div class="c" style="left:154px;width:32px"><svg class="ic" style="left:7px" width="16" height="16" viewBox="0 0 16 16"><circle cx="8" cy="8" r="7" stroke="#999" stroke-width="1.6" fill="none"/><path d="M7.6 4 V8.3 L11.8 10.6" stroke="#999" stroke-width="1.5" fill="none"/></svg></div><div class="c r lk" style="left:186px;width:110px"><u>48649</u></div><div class="c r lk" style="left:296px;width:105px"><u>(0)</u></div><div class="c l lk" style="left:401px;width:200px;letter-spacing:0.88px"><u>01-000001 - Land Acquisition</u></div><div class="c l" style="left:601px;width:200px;letter-spacing:0.88px"></div><div class="c" style="left:801px;width:110px"></div><div class="c l" style="left:911px;width:150px;letter-spacing:0.68px">USD - Dollar (USA)</div><div class="c r" style="left:1061px;width:110px;letter-spacing:0.28px">0.09</div><div class="c r" style="left:1171px;width:152px;letter-spacing:0.48px">$1,200,000.00</div><div class="c" style="left:1323px;width:162px;letter-spacing:0.48px"><span style="position:absolute;left:91.4px">$108,000.00</span></div></div>
<div class="row" style="top:714px"><div class="c" style="left:121px;width:33px"><svg class="ic" style="left:6px;top:2px" width="20" height="20" viewBox="0 0 20 20"><path d="M14.58 9.38 L16.03 7.93 A2.8 2.8 0 0 0 12.07 3.97 L8.22 7.82 A2.8 2.8 0 0 0 8.5 11.9 M5.42 10.62 L3.97 12.07 A2.8 2.8 0 0 0 7.93 16.03 L11.78 12.18 A2.8 2.8 0 0 0 11.5 8.1" stroke="#999" stroke-width="1.7" fill="none" stroke-linecap="round"/></svg></div><div class="c" style="left:154px;width:32px"><svg class="ic" style="left:7px" width="16" height="16" viewBox="0 0 16 16"><circle cx="8" cy="8" r="7" stroke="#999" stroke-width="1.6" fill="none"/><path d="M7.6 4 V8.3 L11.8 10.6" stroke="#999" stroke-width="1.5" fill="none"/></svg></div><div class="c r lk" style="left:186px;width:110px"><u>48651</u></div><div class="c r lk" style="left:296px;width:105px"><u>(0)</u></div><div class="c l lk" style="left:401px;width:200px;letter-spacing:0.88px"><u>01-000001 - Land Acquisition</u></div><div class="c l" style="left:601px;width:200px;letter-spacing:0.88px"></div><div class="c" style="left:801px;width:110px"></div><div class="c l" style="left:911px;width:150px;letter-spacing:0.68px">USD - Dollar (USA)</div><div class="c r" style="left:1061px;width:110px;letter-spacing:0.28px">0.13</div><div class="c r" style="left:1171px;width:152px;letter-spacing:0.48px">$1,200,000.00</div><div class="c" style="left:1323px;width:162px;letter-spacing:0.48px"><span style="position:absolute;left:88.4px">$156,000.00</span></div></div>
<div class="row" style="top:738px"><div class="c" style="left:121px;width:33px"><svg class="ic" style="left:6px;top:2px" width="20" height="20" viewBox="0 0 20 20"><path d="M14.58 9.38 L16.03 7.93 A2.8 2.8 0 0 0 12.07 3.97 L8.22 7.82 A2.8 2.8 0 0 0 8.5 11.9 M5.42 10.62 L3.97 12.07 A2.8 2.8 0 0 0 7.93 16.03 L11.78 12.18 A2.8 2.8 0 0 0 11.5 8.1" stroke="#999" stroke-width="1.7" fill="none" stroke-linecap="round"/></svg></div><div class="c" style="left:154px;width:32px"><svg class="ic" style="left:7px" width="16" height="16" viewBox="0 0 16 16"><circle cx="8" cy="8" r="7" stroke="#999" stroke-width="1.6" fill="none"/><path d="M7.6 4 V8.3 L11.8 10.6" stroke="#999" stroke-width="1.5" fill="none"/></svg></div><div class="c r lk" style="left:186px;width:110px"><u>48653</u></div><div class="c r lk" style="left:296px;width:105px"><u>(0)</u></div><div class="c l lk" style="left:401px;width:200px;letter-spacing:0.88px"><u>01-000001 - Land Acquisition</u></div><div class="c l" style="left:601px;width:200px;letter-spacing:0.88px"></div><div class="c" style="left:801px;width:110px"></div><div class="c l" style="left:911px;width:150px;letter-spacing:0.68px">USD - Dollar (USA)</div><div class="c r" style="left:1061px;width:110px;letter-spacing:0.28px">0.15</div><div class="c r" style="left:1171px;width:152px;letter-spacing:0.48px">$1,200,000.00</div><div class="c" style="left:1323px;width:162px;letter-spacing:0.48px"><span style="position:absolute;left:88.4px">$180,000.00</span></div></div>
</div></div>

<!-- scrollbar -->
<div class="a" style="left:627px;top:763px;width:795px;height:13px;background:#fafafa"></div>
<svg class="a" style="left:130px;top:765px" width="6" height="9" viewBox="0 0 6 9"><path d="M5.5 0 V9 L0 4.5 Z" fill="#888"/></svg>
<div class="a" style="left:144px;top:765px;width:485px;height:9px;border-radius:5px;background:#8a8a8a"></div>
<svg class="a" style="left:1408px;top:765px" width="6" height="9" viewBox="0 0 6 9"><path d="M0.5 0 V9 L6 4.5 Z" fill="#888"/></svg>

<!-- footer -->
<div class="a" style="left:121px;top:777px;width:1302px;height:1px;background:#808080"></div>
<div class="a" style="left:121px;top:778px;width:1302px;height:24px;background:#999"></div>
<div class="a ft" style="left:1061px;width:102px;letter-spacing:0.55px">5,390.64</div>
<div class="a ft" style="left:1171px;width:144px;letter-spacing:0.2px">$268,291,023.10</div>
<div class="a" style="left:1323px;top:778px;width:100px;height:24px;overflow:hidden"><div class="a ft" style="left:69px;top:5px;width:200px;text-align:left;letter-spacing:0.35px">$44,370,000.00</div></div>

<!-- pager -->
<div class="a" style="left:121px;top:802px;width:1302px;height:18px;background:#ebebeb;overflow:hidden">
  <div class="a" style="left:14px;top:9px;width:3px;height:12px;background:#999"></div>
  <svg class="a" style="left:17px;top:9px" width="7" height="12" viewBox="0 0 7 12"><path d="M0 12 L7 1 V12 Z" fill="#999"/></svg>
  <svg class="a" style="left:32px;top:9px" width="8" height="12" viewBox="0 0 8 12"><path d="M0 12 L8 0.5 V12 Z" fill="#999"/></svg>
  <div class="a" style="left:45px;top:5px;width:17px;height:20px;border:1px solid #222;background:#fff"></div>
  <div class="a" style="left:50px;top:10px;font-size:13px;color:#222;line-height:14px">1</div>
  <div class="a" style="left:67px;top:10px;font-size:13px;color:#222;line-height:14px;word-spacing:0;white-space:nowrap">2</div>
  <div class="a" style="left:84px;top:10px;font-size:13px;color:#222;line-height:14px">3</div>
  <div class="a" style="left:100px;top:10px;font-size:13px;color:#222;line-height:14px">4</div>
  <div class="a" style="left:118px;top:10px;font-size:13px;color:#222;line-height:14px">5</div>
  <div class="a" style="left:135px;top:10px;font-size:13px;color:#222;line-height:14px">6</div>
  <div class="a" style="left:152px;top:10px;font-size:13px;color:#222;line-height:14px">7</div>
  <div class="a" style="left:169px;top:10px;font-size:13px;color:#222;line-height:14px">8</div>
  <div class="a" style="left:186px;top:10px;font-size:13px;color:#222;line-height:14px">9</div>
  <div class="a" style="left:203px;top:10px;font-size:13px;color:#222;line-height:14px">10</div>
  <svg class="a" style="left:246px;top:9px" width="8" height="12" viewBox="0 0 8 12"><path d="M0 0.5 V12 H8 Z" fill="#999"/></svg>
  <svg class="a" style="left:262px;top:9px" width="7" height="12" viewBox="0 0 7 12"><path d="M0 1 V12 H7 Z" fill="#999"/></svg>
  <div class="a" style="left:269px;top:9px;width:3px;height:12px;background:#999"></div>
  <div class="a" style="left:295px;top:10px;font-size:12px;color:#999;line-height:14px;letter-spacing:0px">PAGE SIZE</div>
  <div class="a" style="left:361px;top:5px;width:46px;height:20px;border:1px solid #666;background:#fff"></div>
  <div class="a" style="left:387px;top:5px;width:1px;height:20px;background:#666"></div>
  <svg class="a" style="left:393px;top:14px" width="8" height="4" viewBox="0 0 8 4"><path d="M0 0 H8 L4 4 Z" fill="#333"/></svg>
  <div class="a" style="left:363px;top:10px;font-size:13px;color:#999;line-height:14px">20</div>
</div>

<!-- red annotation boxes -->
<div class="red" style="left:114px;top:24px;width:123px;height:37px"></div>
<div class="red" style="left:107px;top:67px;width:1179px;height:42px"></div>
<div class="red" style="left:113px;top:119px;width:418px;height:45px"></div>
<div class="red" style="left:116px;top:180px;width:584px;height:60px"></div>
<div class="red" style="left:116px;top:236px;width:1309px;height:224px"></div>
</body></html>
